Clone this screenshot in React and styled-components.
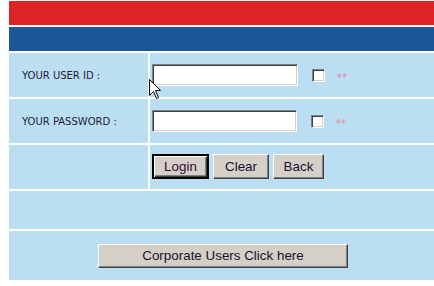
import React from 'react';
import styled, { createGlobalStyle } from 'styled-components';

const GlobalStyle = createGlobalStyle`
  html, body {
    margin: 0;
    padding: 0;
    background: #ffffff;
  }
`;

const Page = styled.div`
  position: relative;
  width: 434px;
  height: 286px;
  padding: 1px 0 0 9px;
  box-sizing: border-box;
  background: #ffffff;
`;

const Layout = styled.div`
  display: grid;
  grid-template-columns: 139px 1fr;
  grid-template-rows: 24px 24px 44px 44px 44px 38px 49px;
  gap: 2px;
  width: 425px;
`;

const Bar = styled.div`
  grid-column: 1 / -1;
  background: ${({ color }) => color};
`;

const Cell = styled.div`
  background: #bbdef3;
  display: flex;
  align-items: center;
  grid-column: ${({ span }) => (span ? '1 / -1' : 'auto')};
  justify-content: ${({ center }) => (center ? 'center' : 'flex-start')};
  padding-left: ${({ pad }) => pad || 0}px;
`;

const Label = styled.span`
  font-family: 'DejaVu Sans', Verdana, sans-serif;
  font-size: 10px;
  color: #1c1c38;
  padding-top: 1px;
`;

const TextInput = styled.input`
  width: ${({ w }) => w}px;
  height: 22px;
  box-sizing: border-box;
  margin: 0;
  padding: 2px;
  background: #ffffff;
  border: 1px solid;
  border-color: #808080 #ffffff #ffffff #808080;
  box-shadow: inset 1px 1px #404040, inset -1px -1px #d4d0c8;
  outline: none;
`;

const Check = styled.span`
  display: inline-block;
  width: 13px;
  height: 13px;
  box-sizing: border-box;
  margin-left: ${({ ml }) => ml}px;
  background: #ffffff;
  border: 1px solid;
  border-color: #808080 #ffffff #ffffff #808080;
  box-shadow: inset 1px 1px #404040, inset -1px -1px #d4d0c8;
`;

const Stars = styled.span`
  margin-left: 12px;
  font-family: 'DejaVu Sans', Verdana, sans-serif;
  font-size: 10px;
  color: ${({ tone }) => tone};
  padding-top: 4px;
`;

const ButtonRow = styled.div`
  display: flex;
  gap: 4px;
  padding-bottom: 1px;
`;

const Button = styled.button`
  height: ${({ h }) => h || 25}px;
  width: ${({ w }) => w}px;
  box-sizing: border-box;
  margin: 0;
  padding: 0;
  font-family: 'Liberation Sans', Arial, sans-serif;
  font-size: 13.4px;
  color: #1a1030;
  background: #d4d0c8;
  border: 1px solid;
  border-color: #ffffff #404040 #404040 #ffffff;
  box-shadow: inset -1px -1px #808080, inset 1px 1px #d4d0c8;
  outline: none;
  cursor: default;
`;

const DefaultButton = styled(Button)`
  border: 2px solid;
  border-color: #000000;
  box-shadow: inset 1px 1px #ffffff, inset -1px -1px #404040, inset -2px -2px #808080;
  color: #3a0838;
`;

const Pointer = styled.svg`
  position: absolute;
  left: 149px;
  top: 79px;
`;

const App = () => (
  <>
    <GlobalStyle />
    <Page>
      <Layout>
        <Bar color="#df2426" />
        <Bar color="#1b5696" />

        <Cell pad={13}>
          <Label>YOUR USER ID :</Label>
        </Cell>
        <Cell pad={2}>
          <TextInput w={146} />
          <Check ml={14} />
          <Stars tone="#ea7fa6">**</Stars>
        </Cell>

        <Cell pad={13}>
          <Label>YOUR PASSWORD :</Label>
        </Cell>
        <Cell pad={2}>
          <TextInput type="password" w={145} />
          <Check ml={14} />
          <Stars tone="#e88c8c">**</Stars>
        </Cell>

        <Cell />
        <Cell pad={2}>
          <ButtonRow>
            <DefaultButton w={57}>Login</DefaultButton>
            <Button w={56}>Clear</Button>
            <Button w={51}>Back</Button>
          </ButtonRow>
        </Cell>

        <Cell span />

        <Cell span center pad={3}>
          <Button w={250} h={24}>Corporate Users Click here</Button>
        </Cell>
      </Layout>

      <Pointer width="13" height="21" viewBox="0 0 13 21">
        <path
          d="M0.5 0.5 L0.5 16.5 L4.5 12.5 L7.5 19.5 L9.5 18.5 L6.5 11.5 L11.5 11.5 Z"
          fill="#ffffff"
          stroke="#000000"
          strokeWidth="1"
        />
      </Pointer>
    </Page>
  </>
);

export default App;
